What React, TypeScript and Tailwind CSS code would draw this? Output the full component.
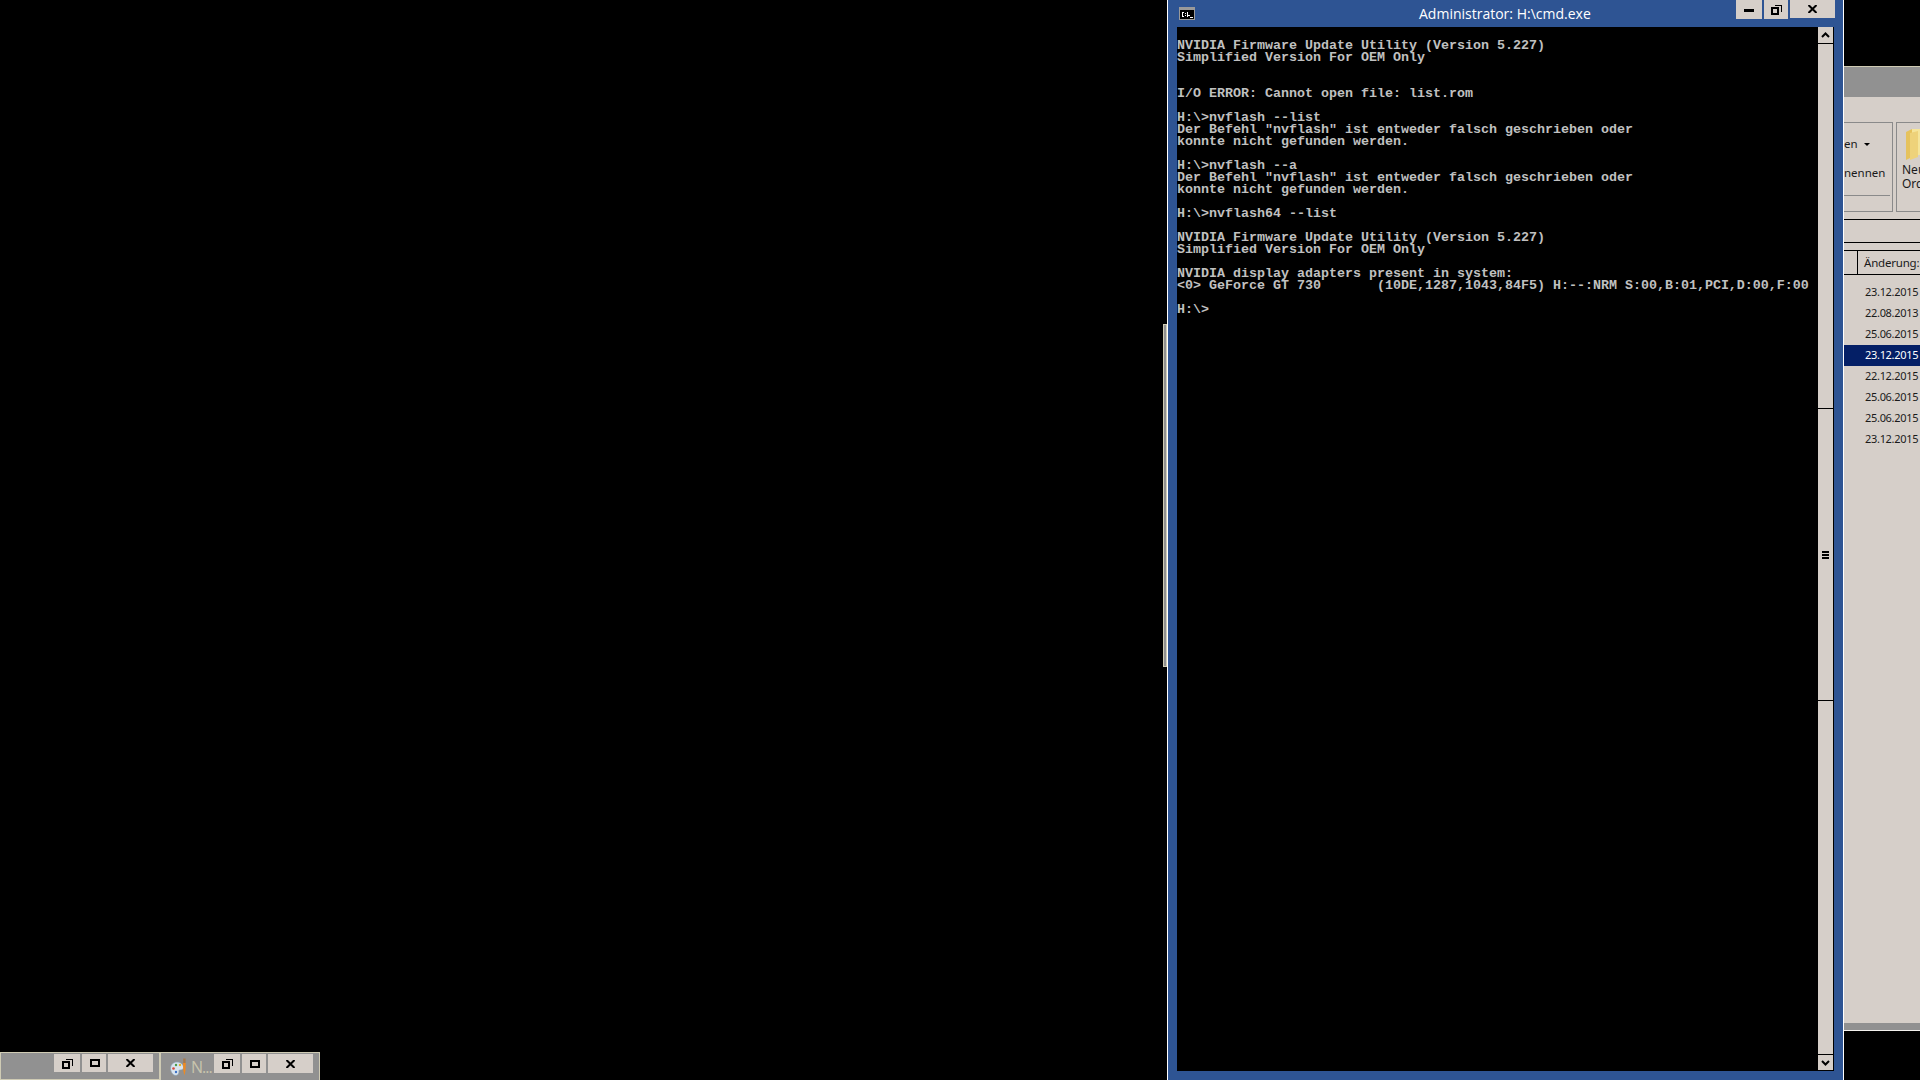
const consoleLines = [
  "NVIDIA Firmware Update Utility (Version 5.227)",
  "Simplified Version For OEM Only",
  "",
  "",
  "I/O ERROR: Cannot open file: list.rom",
  "",
  "H:\\>nvflash --list",
  'Der Befehl "nvflash" ist entweder falsch geschrieben oder',
  "konnte nicht gefunden werden.",
  "",
  "H:\\>nvflash --a",
  'Der Befehl "nvflash" ist entweder falsch geschrieben oder',
  "konnte nicht gefunden werden.",
  "",
  "H:\\>nvflash64 --list",
  "",
  "NVIDIA Firmware Update Utility (Version 5.227)",
  "Simplified Version For OEM Only",
  "",
  "NVIDIA display adapters present in system:",
  "<0> GeForce GT 730       (10DE,1287,1043,84F5) H:--:NRM S:00,B:01,PCI,D:00,F:00",
  "",
  "H:\\>",
];

const dates = [
  "23.12.2015",
  "22.08.2013",
  "25.06.2015",
  "23.12.2015",
  "22.12.2015",
  "25.06.2015",
  "25.06.2015",
  "23.12.2015",
];

function MinIcon() {
  return (
    <svg width="10" height="4" viewBox="0 0 10 4" shapeRendering="crispEdges" className="mt-[3px]">
      <rect width="10" height="3" y="0" fill="#000" />
    </svg>
  );
}

function RestoreIcon() {
  return (
    <svg width="11" height="11" viewBox="0 0 11 11" fill="none" stroke="#000" shapeRendering="crispEdges">
      <rect x="1" y="4" width="6" height="6" strokeWidth="2" />
      <path d="M3.5 1.5h7v6" strokeWidth="1.5" />
    </svg>
  );
}

function MaxIcon() {
  return (
    <svg width="10" height="8" viewBox="0 0 10 8" fill="none" stroke="#000" shapeRendering="crispEdges" className="ml-[1px]">
      <rect x="1" y="1" width="8" height="6" strokeWidth="2" />
    </svg>
  );
}

function CloseIcon() {
  return (
    <svg width="9" height="8" viewBox="0 0 9 8" fill="none" stroke="#000" strokeWidth="2">
      <path d="M0.5 0 8.5 8M8.5 0 0.5 8" />
    </svg>
  );
}

function ConsoleIcon() {
  return (
    <svg width="16" height="13" viewBox="0 0 16 13" shapeRendering="crispEdges">
      <rect width="16" height="13" fill="#9a9a9a" />
      <rect x="1" y="3" width="14" height="9" fill="#000" />
      <path d="M3 5h2v1H3zM3 6h1v3H3zM3 9h2v1H3zM6 6h1v1H6zM6 8h1v1H6zM8 5h1v3h2v1H9v1H8zM11 10h3v1h-3z" fill="#fff" />
    </svg>
  );
}

function PaintIcon() {
  return (
    <svg width="18" height="18" viewBox="0 0 18 18" className="shrink-0">
      <path d="M0.5 10.5c0-4 3-6.5 6.5-6.5s6.5 2.5 6.5 5.5c0 2-2 2.5-3.5 2.5s-1 1-1 2-1 3.5-3 3.5c-3 0-5.5-3.5-5.5-7z" fill="#d9e4ee" stroke="#8aa0b4" strokeWidth="0.7" />
      <circle cx="3.5" cy="10.5" r="1.3" fill="#d94a3a" />
      <circle cx="6" cy="7" r="1.2" fill="#4a9a4a" />
      <circle cx="10" cy="7" r="1.2" fill="#e0b030" />
      <circle cx="6" cy="14" r="1.2" fill="#3a70c8" />
      <path d="M13 5h2.8l-0.4 8-1 4.5-1-4.5z" fill="#ee8a22" />
      <path d="M13.2 0.5h2.4V5H13.2z" fill="#a8794a" />
    </svg>
  );
}

function CaptionButton({ width, height, children }: { width: string; height: string; children: React.ReactNode }) {
  return <div className={`flex items-center justify-center bg-[#d6cfc9] ${width} ${height}`}>{children}</div>;
}

function MinimizedBar({ left, children }: { left: string; children: React.ReactNode }) {
  return (
    <div className={`absolute top-[1052px] flex h-[28px] w-[160px] items-start border-t border-l border-r border-[#cfcbb4] bg-[#919191] pt-[1px] ${left}`}>
      {children}
    </div>
  );
}

export default function App() {
  return (
    <div className="relative h-[1080px] w-[1920px] overflow-hidden bg-black font-['Open_Sans',sans-serif]">
      {/* sliver of a window behind the console */}
      <div className="absolute left-[1163px] top-[324px] h-[343px] w-[4px] border border-[#cfcbb4] bg-[#8f8f8f]" />

      {/* explorer window, mostly covered */}
      <div className="absolute left-[1844px] top-[66px] flex h-[965px] w-[76px] flex-col overflow-hidden border-t border-[#cfcbb4] bg-[#d6cfc9] font-['Noto_Sans',sans-serif] text-[#1a1a1a]">
        <div className="h-[30px] shrink-0 bg-[#919191]" />
        <div className="mt-[25px] flex h-[90px] shrink-0 gap-[3px]">
          <div className="flex w-[49px] shrink-0 flex-col overflow-hidden border-t border-r border-b border-[#8a8a8a]">
            <div className="mt-[12px] flex h-[18px] items-center gap-[6px] whitespace-nowrap text-[11.5px] leading-none">
              <span>en</span>
              <span className="h-0 w-0 border-x-[3px] border-t-[3px] border-x-transparent border-t-black" />
            </div>
            <div className="mt-[14px] h-[12px] whitespace-nowrap text-[11.5px] leading-none">nennen</div>
            <div className="mt-[16px] h-[1px] w-[46px] bg-[#8a8a8a]" />
          </div>
          <div className="flex min-w-0 flex-1 flex-col border-t border-l border-b border-[#8a8a8a]">
            <svg width="16" height="33" viewBox="0 0 16 33" className="ml-[9px] mt-[5px] shrink-0">
              <path d="M0 4 6 1v28l-6 3z" fill="#e6c25c" />
              <path d="M6 1h8l2 2v24H6z" fill="#f6e59a" />
              <path d="M4 5 12 3v26l-8 3z" fill="#eed27a" />
            </svg>
            <div className="ml-[5px] mt-[2px] whitespace-nowrap text-[12px] leading-[14px]">
              Neu
              <br />
              Ord
            </div>
          </div>
        </div>
        <div className="mt-[7px] h-[24px] shrink-0 border-y border-black" />
        <div className="mt-[7px] flex h-[25px] shrink-0 border-y border-black">
          <div className="w-[14px] shrink-0 border-r border-black" />
          <div className="whitespace-nowrap pl-[6px] pt-[3px] text-[11.5px] tracking-[-0.2px]">Änderung:</div>
        </div>
        <div className="mt-[7px] flex flex-col">
          {dates.map((date, i) => (
            <div
              key={i}
              className={`flex h-[21px] items-center whitespace-nowrap pl-[21px] text-[11px] tracking-[-0.3px] ${
                i === 3 ? "bg-[#041f66] text-white" : ""
              }`}
            >
              {date}
            </div>
          ))}
        </div>
        <div className="mt-auto h-[8px] shrink-0 border-b border-[#f4f2ee] bg-[#919191]" />
      </div>

      {/* console window */}
      <div className="absolute left-[1167px] top-0 flex h-[1080px] w-[677px] flex-col border-x border-white bg-[#2e5493]">
        <div className="relative flex h-[27px] shrink-0 items-center pl-[11px]">
          <ConsoleIcon />
          <div className="absolute left-[251px] top-[4px] whitespace-nowrap text-[14px] leading-[20px] text-white">
            Administrator: H:\cmd.exe
          </div>
          <div className="absolute left-[568px] top-0 flex gap-[2px]">
            <CaptionButton width="w-[26px]" height="h-[19px]">
              <MinIcon />
            </CaptionButton>
            <CaptionButton width="w-[24px]" height="h-[19px]">
              <RestoreIcon />
            </CaptionButton>
            <CaptionButton width="w-[45px]" height="h-[18px]">
              <CloseIcon />
            </CaptionButton>
          </div>
        </div>
        <div className="ml-[9px] mr-[9px] flex h-[1044px] shrink-0 border-r border-b border-black">
          <div className="flex-1 overflow-hidden bg-black pt-[13px] font-['Liberation_Mono',monospace] text-[13.33px] font-bold leading-[12px] text-[#c0c0c0]">
            {consoleLines.map((line, i) => (
              <div key={i} className="h-[12px] whitespace-pre">
                {line}
              </div>
            ))}
          </div>
          <div className="flex w-[15px] shrink-0 flex-col bg-[#d6cfc9]">
            <div className="flex h-[17px] shrink-0 items-center justify-center border-b border-black">
              <svg width="9" height="6" viewBox="0 0 9 6" fill="none" stroke="#000" strokeWidth="2">
                <path d="M1 5 4.5 1.5 8 5" />
              </svg>
            </div>
            <div className="mt-[364px] flex h-[293px] shrink-0 items-center justify-center border-y border-black">
              <div className="flex w-[7px] flex-col gap-[1px]">
                <div className="h-[2px] bg-black" />
                <div className="h-[2px] bg-black" />
                <div className="h-[2px] bg-black" />
              </div>
            </div>
            <div className="mt-auto flex h-[16px] shrink-0 items-center justify-center border-t border-black">
              <svg width="9" height="6" viewBox="0 0 9 6" fill="none" stroke="#000" strokeWidth="2">
                <path d="M1 1 4.5 4.5 8 1" />
              </svg>
            </div>
          </div>
        </div>
      </div>

      {/* minimized windows */}
      <MinimizedBar left="left-0">
        <div className="ml-[53px] flex gap-[2px]">
          <CaptionButton width="w-[26px]" height="h-[18px]">
            <RestoreIcon />
          </CaptionButton>
          <CaptionButton width="w-[24px]" height="h-[18px]">
            <MaxIcon />
          </CaptionButton>
          <CaptionButton width="w-[45px]" height="h-[18px]">
            <CloseIcon />
          </CaptionButton>
        </div>
        <div className="absolute bottom-0 left-0 h-[1px] w-full bg-[#cfcbb4]" />
      </MinimizedBar>
      <MinimizedBar left="left-[160px]">
        <div className="ml-[9px] mt-[4px] flex w-[44px] shrink-0 items-center gap-[3px] overflow-hidden">
          <PaintIcon />
          <span className="text-[16px] leading-none tracking-[-1px] text-[#c9c5ad]">N...</span>
        </div>
        <div className="flex gap-[2px]">
          <CaptionButton width="w-[26px]" height="h-[19px]">
            <RestoreIcon />
          </CaptionButton>
          <CaptionButton width="w-[24px]" height="h-[19px]">
            <MaxIcon />
          </CaptionButton>
          <CaptionButton width="w-[45px]" height="h-[19px]">
            <CloseIcon />
          </CaptionButton>
        </div>
      </MinimizedBar>
    </div>
  );
}
